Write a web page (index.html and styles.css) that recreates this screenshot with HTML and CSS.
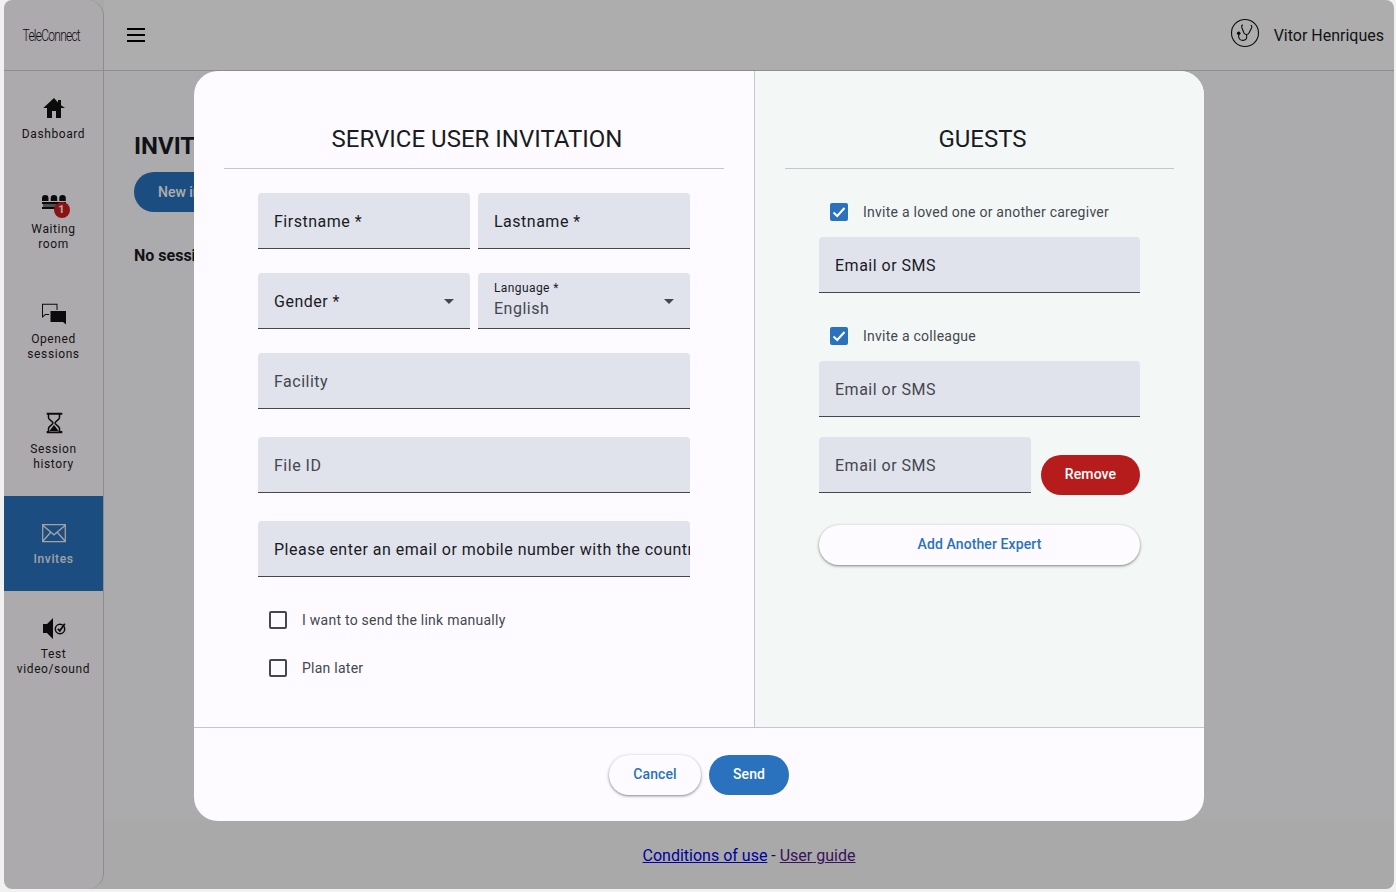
FILE: index.html
```html
<!DOCTYPE html>
<html lang="en">
<head>
<meta charset="utf-8">
<title>TeleConnect</title>
<link rel="stylesheet" href="styles.css">
</head>
<body>
<div class="shell">
  <aside class="rail">
    <div class="brand"><span class="brand-text">TeleConnect</span></div>
    <nav class="nav">
      <a class="nav-item">
        <svg class="nav-icon" viewBox="0 0 24 24"><path d="M19 9.300V4h-3v2.600L12 2 1.300 12H5v10h5v-7h4v7h5V12h4z"/></svg>
        <span>Dashboard</span>
      </a>
      <a class="nav-item nav-tall">
        <span class="icon-wrap">
          <svg class="nav-icon" viewBox="0 0 24 24"><path d="M0 10V7a3.200 3 0 0 1 6.500 0v3zM8.700 10V7a3.200 3 0 0 1 6.500 0v3zM17.300 10V7a3.200 3 0 0 1 6.500 0v3zM0 11h24v2H0zM0 16h24v2H0z"/><path fill="#777" d="M1 13h22v3H1z"/></svg>
          <span class="badge">1</span>
        </span>
        <span>Waiting<br>room</span>
      </a>
      <a class="nav-item nav-tall">
        <svg class="nav-icon" viewBox="0 0 24 24"><path d="M0 2.700h15.500V9h-1V3.700H1V15l2-2h4v1H3.500L0 17z"/><path d="M8.500 10H24v13.500L21 21H8.500z"/></svg>
        <span>Opened<br>sessions</span>
      </a>
      <a class="nav-item nav-tall">
        <svg class="nav-icon" viewBox="0 0 24 24"><path d="M4.700 1.700h15.600v2H4.700zM4.700 20h15.600v2.300H4.700zM12 14l-5 6.500h10z"/><path d="M6.500 3v3.500c0 2.500 4.500 4 4.500 5.500s-4.500 3-4.500 5.500V21M17.500 3v3.500c0 2.500-4.500 4-4.500 5.500s4.500 3 4.500 5.500V21" fill="none" stroke="#111" stroke-width="1.500"/></svg>
        <span>Session<br>history</span>
      </a>
      <a class="nav-item nav-active">
        <svg class="nav-icon nav-icon-line" viewBox="0 0 24 24"><path d="M.7 3.700h22.600v17H.7zM1 4.500l11 9.300 11-9.300M1 20l8.200-9.200M23 20l-8.200-9.200"/></svg>
        <span>Invites</span>
      </a>
      <a class="nav-item nav-tall">
        <svg class="nav-icon" viewBox="0 0 24 24"><path d="M1 8h4l6-6v21l-6-6H1z"/><circle cx="18" cy="13" r="4.700" fill="none" stroke="#111" stroke-width="1.500"/><path d="M15.800 12.800l2 2 5-7" fill="none" stroke="#111" stroke-width="1.800"/></svg>
        <span>Test<br>video/sound</span>
      </a>
    </nav>
  </aside>
  <div class="content">
    <header class="topbar">
      <svg class="menu-icon" viewBox="0 0 24 24"><path d="M3 5h18v2H3zM3 11h18v2H3zM3 17h18v2H3z"/></svg>
      <div class="user">
        <svg class="user-icon" viewBox="0 0 30 30"><circle cx="15" cy="15" r="13.500" fill="none" stroke="#111" stroke-width="1.100"/><path d="M13 7c-1.500 0-1.500 1-1 3l2 5c1 2 4 2 5 0l2.500-5c.5-1.500.5-2.500-.8-2.800M16.700 16.500V19c0 4-7 5-8 0v-3.500" fill="none" stroke="#111" stroke-width="1.100"/><circle cx="8.700" cy="15.300" r="1.800" fill="#111"/></svg>
        <span>Vitor Henriques</span>
      </div>
    </header>
    <main class="main">
      <h1 class="page-title">INVITATIONS</h1>
      <button class="new-btn">New invitation</button>
      <p class="empty">No session</p>
    </main>
    <footer class="footer">
      <a class="link-new" href="#conditions">Conditions of use</a> - <a class="link-seen" href="#guide">User guide</a>
    </footer>
  </div>
  <div class="overlay"></div>
  <section class="modal">
    <div class="modal-body">
      <div class="panel panel-left">
        <h2 class="panel-title">SERVICE USER INVITATION</h2>
        <div class="form form-left">
          <div class="row">
            <div class="field">Firstname *</div>
            <div class="field">Lastname *</div>
          </div>
          <div class="row">
            <div class="field field-select">Gender *<i class="caret"></i></div>
            <div class="field field-select">
              <div class="stack"><small>Language *</small><span>English</span></div>
              <i class="caret"></i>
            </div>
          </div>
          <div class="field field-muted">Facility</div>
          <div class="field field-muted field-wide">File ID</div>
          <div class="field field-wide">Please enter an email or mobile number with the country code</div>
          <div class="checks">
            <label class="check"><i class="box"></i>I want to send the link manually</label>
            <label class="check"><i class="box"></i>Plan later</label>
          </div>
        </div>
      </div>
      <div class="panel panel-right">
        <h2 class="panel-title">GUESTS</h2>
        <div class="form form-right">
          <label class="check check-first"><i class="box box-on"><svg viewBox="0 0 18 18"><path d="M3.500 9.500l3.700 3.500 7.300-8" fill="none" stroke="#fff" stroke-width="2"/></svg></i>Invite a loved one or another caregiver</label>
          <div class="field">Email or SMS</div>
          <label class="check check-next"><i class="box box-on"><svg viewBox="0 0 18 18"><path d="M3.500 9.500l3.700 3.500 7.300-8" fill="none" stroke="#fff" stroke-width="2"/></svg></i>Invite a colleague</label>
          <div class="field field-muted">Email or SMS</div>
          <div class="expert">
            <div class="field field-muted field-expert">Email or SMS</div>
            <button class="btn btn-danger">Remove</button>
          </div>
          <button class="btn btn-white btn-add">Add Another Expert</button>
        </div>
      </div>
    </div>
    <div class="modal-foot">
      <button class="btn btn-white btn-cancel">Cancel</button>
      <button class="btn btn-primary">Send</button>
    </div>
  </section>
</div>
</body>
</html>
```
FILE: styles.css
```css
* { box-sizing: border-box; }
html, body { height: 100%; }
body {
  margin: 0;
  padding: 0 2px 3px 4px;
  background: #f1f1f1;
  font-family: Roboto, "Liberation Sans", sans-serif;
  color: #1a1b1f;
  overflow: hidden;
}
.shell {
  position: relative;
  display: flex;
  height: 889px;
  border-radius: 8px;
  overflow: hidden;
  background: #f9f9f9;
}
.rail {
  width: 100px;
  flex: none;
  background: #fefbff;
  border-right: 1px solid #d2d0d2;
  border-radius: 0 16px 16px 0;
  overflow: hidden;
}
.brand {
  height: 71px;
  display: flex;
  align-items: center;
  justify-content: center;
  padding-right: 5px;
  border-bottom: 1px solid #d2d0d2;
}
.brand-text {
  display: block;
  font-size: 16px;
  font-weight: 300;
  letter-spacing: -1px;
  color: #111;
  transform: scaleX(.75);
}
.nav { display: flex; flex-direction: column; }
.nav-item {
  height: 95px;
  padding-top: 25px;
  display: flex;
  flex-direction: column;
  align-items: center;
  font-size: 12px;
  line-height: 14.500px;
  letter-spacing: .6px;
  font-weight: 400;
  text-align: center;
  color: #1d1b20;
  gap: 7px;
}
.nav-tall { height: 110px; }
.nav-icon { width: 24px; height: 24px; display: block; fill: #111; }
.icon-wrap { position: relative; display: block; }
.badge {
  position: absolute;
  right: -4px;
  bottom: -3px;
  width: 16px;
  height: 16px;
  border-radius: 50%;
  background: #ce1c1c;
  color: #fff;
  font-size: 11px;
  line-height: 16px;
  font-weight: 700;
  letter-spacing: 0;
}
.nav-active { background: #2a72bd; color: #e8eef6; font-weight: 500; }
.nav-active .nav-icon-line { fill: none; stroke: #f0f0f0; stroke-width: 1.300; }
.content { flex: 1; min-width: 0; display: flex; flex-direction: column; }
.topbar {
  height: 71px;
  flex: none;
  display: flex;
  align-items: center;
  justify-content: space-between;
  padding: 0 10px 0 20px;
  background: #fff;
  border-bottom: 1px solid #d2d0d2;
}
.menu-icon { width: 24px; height: 24px; display: block; }
.user { display: flex; align-items: center; gap: 14px; font-size: 16px; }
.user-icon { width: 30px; height: 30px; margin-top: -4px; }
.main { flex: 1; background: #fdfbff; padding: 60px 30px 0; }
.page-title { margin: 0 0 11px; font-size: 24px; line-height: 30px; font-weight: 700; color: #1a1b1f; }
.new-btn {
  width: 160px;
  height: 40px;
  border: 0;
  border-radius: 20px;
  background: #2a72bd;
  color: #fff;
  font: 500 14px Roboto, sans-serif;
  text-align: left;
  padding-left: 24px;
}
.empty { margin: 34px 0 0; font-size: 16px; line-height: 20px; font-weight: 700; }
.footer {
  height: 69px;
  flex: none;
  padding-top: 2px;
  font-size: 16px;
  line-height: 67px;
  text-align: center;
}
.link-new { color: #0000ee; text-decoration: underline; }
.link-seen { color: #551a8b; text-decoration: underline; }
.overlay { position: absolute; inset: 0; background: rgba(0, 0, 0, .32); }
.modal {
  position: absolute;
  left: 190px;
  top: 71px;
  width: 1010px;
  height: 750px;
  background: #fdfbff;
  border-radius: 24px;
  overflow: hidden;
  display: flex;
  flex-direction: column;
}
.modal-body { height: 657px; flex: none; display: flex; border-bottom: 1px solid #c4c6cf; }
.panel { padding: 52px 30px 0; }
.panel-left { width: 561px; border-right: 1px solid #c4c6cf; }
.panel-right { flex: 1; background: #f3f8f7; }
.panel-title {
  margin: 0;
  height: 46px;
  padding-left: 6px;
  font-size: 24px;
  line-height: 32px;
  font-weight: 400;
  text-align: center;
  color: #1a1b1f;
  border-bottom: 1px solid #c4c6cf;
}
.form { display: flex; flex-direction: column; }
.form-left { width: 432px; margin: 24px 0 0 34px; gap: 24px; }
.form-right { width: 321px; margin: 0 0 0 34px; }
.row { display: flex; gap: 8px; }
.row .field { flex: 1; min-width: 0; }
.field {
  height: 56px;
  display: flex;
  align-items: center;
  padding: 2px 0 0 16px;
  background: #e0e2ec;
  border-bottom: 1px solid #44474e;
  border-radius: 4px 4px 0 0;
  font-size: 16px;
  letter-spacing: .5px;
  color: #1a1b1f;
  white-space: nowrap;
  overflow: hidden;
}
.field-muted { color: #44474e; }
.field-wide { margin-top: 4px; }
.field-select { justify-content: space-between; padding-right: 16px; }
.caret { width: 0; height: 0; border: 5px solid transparent; border-top-color: #44474e; border-bottom: 0; }
.stack { display: flex; flex-direction: column; align-self: flex-start; padding-top: 5px; color: #44474e; }
.stack small { font-size: 12px; line-height: 16px; letter-spacing: .4px; color: #1a1b1f; }
.stack span { margin-top: 1px; font-size: 16px; line-height: 24px; }
.checks { display: flex; flex-direction: column; gap: 8px; margin-top: -1px; }
.check {
  height: 40px;
  display: flex;
  align-items: center;
  gap: 15px;
  padding-left: 11px;
  font-size: 14px;
  letter-spacing: .25px;
  color: #44474e;
}
.box {
  width: 18px;
  height: 18px;
  flex: none;
  display: block;
  border: 2px solid #44474e;
  border-radius: 2px;
}
.box-on { border: 0; background: #2a72bd; }
.box-on svg { display: block; width: 18px; height: 18px; }
.check-first { margin-top: 23px; margin-bottom: 5px; }
.check-next { margin-top: 23px; margin-bottom: 5px; }
.expert { display: flex; gap: 10px; margin-top: 20px; }
.field-expert { width: 212px; flex: none; }
.btn {
  height: 40px;
  border: 0;
  border-radius: 20px;
  font: 500 14px/20px Roboto, sans-serif;
  letter-spacing: .1px;
  padding: 0 0 2px;
}
.btn-danger { width: 99px; margin-top: 18px; background: #b71c1c; color: #fff; }
.btn-white {
  background: #fdfbff;
  color: #2a72bd;
  box-shadow: 0 1px 3px 1px rgba(0, 0, 0, .15), 0 1px 2px rgba(0, 0, 0, .3);
}
.btn-add { margin-top: 30px; width: 321px; }
.modal-foot { flex: 1; display: flex; align-items: center; justify-content: center; gap: 8px; padding-top: 1px; }
.btn-cancel { width: 92px; }
.btn-primary { width: 80px; background: #2a72bd; color: #fff; }
```
